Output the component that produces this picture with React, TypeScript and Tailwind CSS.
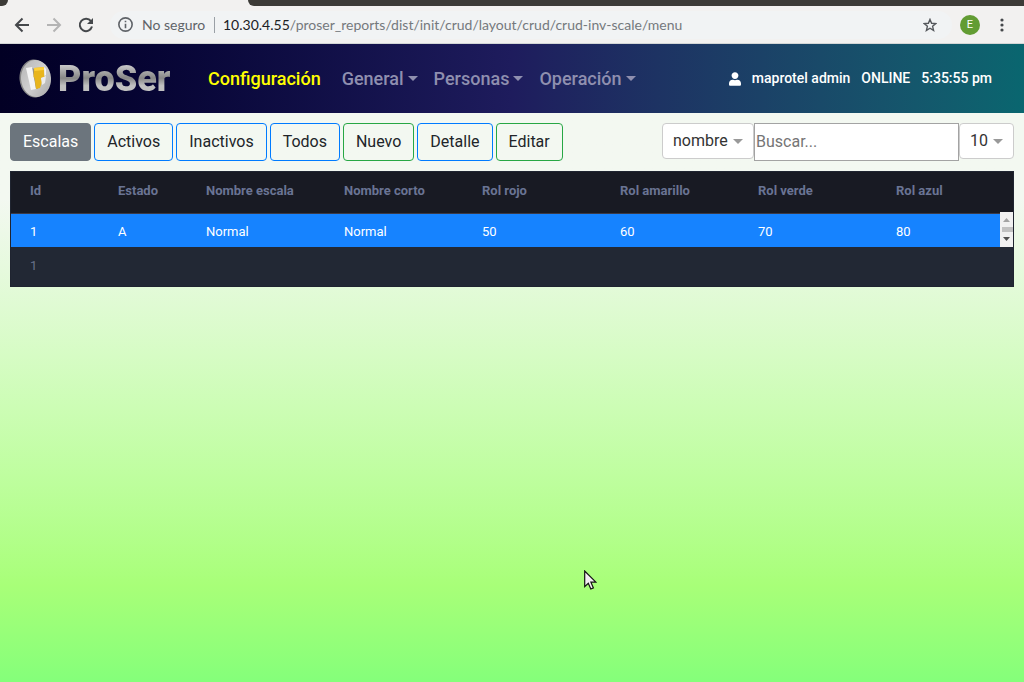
import { useState } from 'react';

function Caret({ className = '' }: { className?: string }) {
  return (
    <svg className={className} width="10" height="5" viewBox="0 0 10 5" fill="currentColor" aria-hidden="true">
      <path d="M0 0h10L5 5z" />
    </svg>
  );
}

function BrowserBar() {
  const iconButton = 'flex size-6 items-center justify-center';
  return (
    <div className="bg-[#f2f1f0]">
      <div className="flex h-[6px] bg-[#f2f1f0]">
        <div className="w-2 rounded-br-md bg-[#3c3b37]" />
        <div className="w-[240px]" />
        <div className="flex-1 rounded-bl-md bg-[#3c3b37]" />
      </div>
      <div className="flex h-[38px] items-center border-b border-[#d3d6d6] px-[10px]">
        <button className={`${iconButton} text-[#45484b]`} aria-label="Atrás">
          <svg width="16" height="16" viewBox="0 0 16 16" fill="none" stroke="currentColor" strokeWidth="2">
            <path d="M15 8H2.5M8.5 1.5L2 8l6.500 6.500" />
          </svg>
        </button>
        <button className={`${iconButton} ml-2 text-[#b4b4b4]`} aria-label="Adelante">
          <svg width="16" height="16" viewBox="0 0 16 16" fill="none" stroke="currentColor" strokeWidth="2">
            <path d="M1 8h12.500M7.500 1.500L14 8l-6.500 6.500" />
          </svg>
        </button>
        <button className={`${iconButton} ml-2 text-[#45484b]`} aria-label="Recargar">
          <svg width="16" height="16" viewBox="0 0 16 16" fill="none" stroke="currentColor" strokeWidth="2">
            <path d="M13 4.200A6.200 6.200 0 1 0 14 9.600" />
            <path d="M15 1v6H9z" fill="currentColor" stroke="none" />
          </svg>
        </button>
        <div className="ml-3 flex h-7 min-w-0 flex-1 items-center rounded-full bg-[#f1f3f4] pl-2 font-['Lato',sans-serif] text-[14px]">
          <svg className="shrink-0 text-[#5f6368]" width="15" height="15" viewBox="0 0 14 14" fill="none" stroke="currentColor" strokeWidth="1.500" aria-hidden="true">
            <circle cx="7" cy="7" r="6.200" />
            <path d="M7 6.200v4.300M7 3.500v1.500" />
          </svg>
          <span className="ml-[9px] w-[64px] shrink-0 whitespace-nowrap text-[#5f6368]">No seguro</span>
          <span className="ml-2 h-4 w-px shrink-0 bg-[#9aa0a6]" />
          <span className="ml-2 truncate text-[#75797d]">
            <span className="text-[#202124]">10.30.4.55</span>/proser_reports/dist/init/crud/layout/crud/crud-inv-scale/menu
          </span>
          <button className="mr-[10px] ml-auto flex size-6 shrink-0 items-center justify-center text-[#55585c]" aria-label="Marcar página">
            <svg width="14" height="14" viewBox="0 0 14 14" fill="none" stroke="currentColor" strokeWidth="1.400">
              <path d="M7 1.400l1.600 3.900 4.200.3-3.200 2.700 1 4.100L7 10.200l-3.600 2.200 1-4.100L1.200 5.600l4.200-.3z" />
            </svg>
          </button>
        </div>
        <button className="ml-2 flex size-5 items-center justify-center rounded-full bg-[#629c33] font-['Roboto',sans-serif] text-[11px] leading-5 text-white" aria-label="Perfil">
          E
        </button>
        <button className={`${iconButton} ml-[10px] text-[#45484b]`} aria-label="Menú">
          <svg width="4" height="14" viewBox="0 0 4 14" fill="currentColor">
            <circle cx="2" cy="2" r="1.600" />
            <circle cx="2" cy="7" r="1.600" />
            <circle cx="2" cy="12" r="1.600" />
          </svg>
        </button>
      </div>
    </div>
  );
}

function Logo() {
  return (
    <a href="#" className="flex w-[150px] items-center gap-[6px]">
      <svg className="shrink-0" width="33" height="39" viewBox="0 0 33 39" aria-hidden="true">
        <defs>
          <linearGradient id="coin" x1="0" y1="0" x2="1" y2="1">
            <stop offset="0" stopColor="#b4b4b4" />
            <stop offset="0.500" stopColor="#d0d0d0" />
            <stop offset="1" stopColor="#a6a6a6" />
          </linearGradient>
        </defs>
        <ellipse cx="15.500" cy="19.500" rx="15" ry="19" fill="#858585" transform="rotate(-5 15.500 19.500)" />
        <ellipse cx="17" cy="19.500" rx="15" ry="18.500" fill="url(#coin)" transform="rotate(-5 17 19.500)" />
        <path d="M13 9l3 1 3 20-4-1z" fill="#8f8f8f" />
        <path d="M7 9l6-1 4 22-5 1z" fill="#f4f4f4" />
        <path d="M15 9l10-1 .5 10-3.500 1 1 4-2 6-4 1-1.500-11-1-1z" fill="#e8b51d" />
        <path d="M15 9l10-1v3l-9.500 1z" fill="#ffd13a" />
        <path d="M22 19l5-2-1 7-3 2z" fill="#ededed" />
        <path d="M25 8l2 2v6l-1.500 1z" fill="#f4f4f4" />
      </svg>
      <span className="bg-linear-to-b from-[#c6c6c6] from-20% via-[#878787] via-48% to-[#c0c0c0] to-65% bg-clip-text font-['Roboto',sans-serif] text-[36px] leading-[44px] font-black text-transparent">
        ProSer
      </span>
    </a>
  );
}

function Navbar() {
  return (
    <header className="flex h-[69px] items-center bg-linear-to-r from-[#020024] via-[#1e1c5d] via-50% to-[#09666f] pr-8 pl-[19px]">
      <Logo />
      <nav className="ml-[39px] flex items-center text-[18px] font-medium text-[#8f8faf]">
        <a href="#" className="mr-[21px] text-[#ffff00]">Configuración</a>
        {['General', 'Personas', 'Operación'].map((item) => (
          <button key={item} className="mr-4 flex items-center gap-1">
            {item}
            <Caret />
          </button>
        ))}
      </nav>
      <div className="ml-auto flex items-center gap-[11px] text-[14px] font-medium text-white">
        <svg width="12" height="14" viewBox="0 0 448 512" fill="currentColor" aria-hidden="true">
          <path d="M224 256c70.700 0 128-57.300 128-128S294.700 0 224 0 96 57.300 96 128s57.300 128 128 128zm89.600 32h-16.700c-22.200 10.200-46.900 16-72.900 16s-50.600-5.800-72.900-16h-16.700C60.200 288 0 348.200 0 422.400V464c0 26.500 21.500 48 48 48h352c26.500 0 48-21.500 48-48v-41.600c0-74.200-60.200-134.400-134.400-134.400z" />
        </svg>
        <span>maprotel admin</span>
        <span>ONLINE</span>
        <span>5:35:55 pm</span>
      </div>
    </header>
  );
}

function Dropdown({ label, options, className }: { label: string; options: string[]; className: string }) {
  return (
    <div className="relative">
      <select
        aria-label={label}
        className={`h-9 appearance-none rounded border border-[#cccccc] bg-white pl-[10px] text-[16px] text-[#333333] ${className}`}
      >
        {options.map((option) => (
          <option key={option}>{option}</option>
        ))}
      </select>
      <Caret className="pointer-events-none absolute top-4 right-[11px] text-[#999999]" />
    </div>
  );
}

const primary = 'border-[#007bff]';
const success = 'border-[#28a745]';

const actions = [
  { label: 'Activos', border: primary },
  { label: 'Inactivos', border: primary },
  { label: 'Todos', border: primary },
  { label: 'Nuevo', border: success },
  { label: 'Detalle', border: primary },
  { label: 'Editar', border: success },
];

function Toolbar() {
  const [query, setQuery] = useState('');
  return (
    <div className="flex items-start justify-between">
      <div className="flex gap-[3px] text-[16px] text-[#212529]">
        <button className="h-[38px] rounded border border-[#6c757d] bg-[#6c757d] px-3 text-white">Escalas</button>
        {actions.map(({ label, border }) => (
          <button key={label} className={`h-[38px] rounded border px-3 ${border}`}>
            {label}
          </button>
        ))}
      </div>
      <div className="flex items-start">
        <Dropdown label="Campo" options={['nombre', 'id']} className="w-[92px]" />
        <input
          type="text"
          aria-label="Buscar"
          placeholder="Buscar..."
          value={query}
          onChange={(event) => setQuery(event.target.value)}
          className="h-[38px] w-[205px] border border-[#a3a3a3] bg-white px-px pb-[2px] text-[16px] text-[#333333] placeholder:text-[#757575]"
        />
        <Dropdown label="Filas por página" options={['10', '20', '50']} className="w-[55px]" />
      </div>
    </div>
  );
}

const columns = [
  { name: 'Id', width: 'w-[88px]' },
  { name: 'Estado', width: 'w-[88px]' },
  { name: 'Nombre escala', width: 'w-[138px]' },
  { name: 'Nombre corto', width: 'w-[138px]' },
  { name: 'Rol rojo', width: 'w-[138px]' },
  { name: 'Rol amarillo', width: 'w-[138px]' },
  { name: 'Rol verde', width: 'w-[138px]' },
  { name: 'Rol azul', width: '' },
];
const rows = [['1', 'A', 'Normal', 'Normal', '50', '60', '70', '80']];

function ScaleTable() {
  return (
    <div className="relative mt-[10px] border border-[#1f2430]">
      <table className="w-full table-fixed border-collapse text-left text-[13px]">
        <thead className="bg-[#181a23] text-[#6a7494]">
          <tr className="h-[41px] border-b border-[#3a3a48]">
            {columns.map(({ name, width }) => (
              <th key={name} className={`pr-0 pb-1 pl-[19px] font-bold ${width}`}>
                {name}
              </th>
            ))}
          </tr>
        </thead>
        <tbody className="bg-[#1683ff] text-white">
          {rows.map((row) => (
            <tr key={row[0]} className="h-[34px]">
              {row.map((cell, index) => (
                <td key={columns[index].name} className="pt-[3px] pl-[19px]">
                  {cell}
                </td>
              ))}
            </tr>
          ))}
        </tbody>
        <tfoot className="bg-[#222834] text-[#68728a]">
          <tr className="h-[39px]">
            <td colSpan={8} className="pb-[2px] pl-[19px]">{rows.length}</td>
          </tr>
        </tfoot>
      </table>
      <div className="absolute top-10 right-0 flex h-[35px] w-[13px] flex-col items-center justify-between bg-[#f1f1f1] pt-[6px] pb-[6px]">
        <svg width="7" height="4" viewBox="0 0 7 4" fill="#a3a3a3" aria-hidden="true">
          <path d="M0 4h7L3.500 0z" />
        </svg>
        <div className="ml-[2px] h-[5px] w-[11px] bg-[#c1c1c1]" />
        <svg width="7" height="4" viewBox="0 0 7 4" fill="#505050" aria-hidden="true">
          <path d="M0 0h7L3.500 4z" />
        </svg>
      </div>
    </div>
  );
}

export default function App() {
  return (
    <div className="relative flex min-h-screen flex-col font-['Roboto',sans-serif]">
      <BrowserBar />
      <Navbar />
      <main className="flex-1 bg-linear-to-b from-[#f3f8f1] from-15% via-[#a8ff78] via-83% to-[#84ff7a] p-[10px]">
        <Toolbar />
        <ScaleTable />
      </main>
      <svg className="pointer-events-none absolute top-[570px] left-[584px]" width="13" height="20" viewBox="0 0 13 20" aria-hidden="true">
        <path d="M.7 1v15.600l3.600-3.400 2.500 5.800 2.600-1.100-2.500-5.700h5z" fill="#f4eef4" stroke="#111" strokeWidth="1.200" />
      </svg>
    </div>
  );
}
